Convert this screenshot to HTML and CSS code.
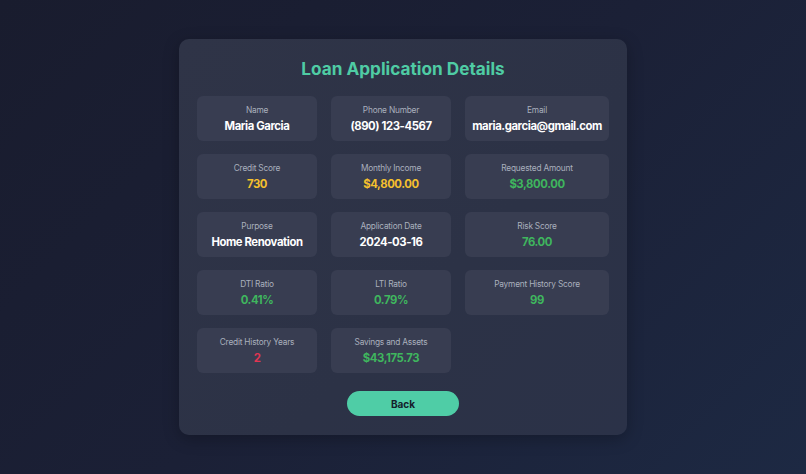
FILE: index.html
```html
<!DOCTYPE html>
<html lang="en">
<head>
<meta charset="utf-8">
<title>Loan Application Details</title>
<link rel="stylesheet" href="styles.css">
</head>
<body>
<main class="card">
  <h1 class="title">Loan Application Details</h1>
  <div class="grid">
    <div class="item"><div class="label">Name</div><div class="value">Maria Garcia</div></div>
    <div class="item"><div class="label">Phone Number</div><div class="value">(890) 123-4567</div></div>
    <div class="item"><div class="label">Email</div><div class="value">maria.garcia@gmail.com</div></div>
    <div class="item"><div class="label">Credit Score</div><div class="value yellow">730</div></div>
    <div class="item"><div class="label">Monthly Income</div><div class="value yellow">$4,800.00</div></div>
    <div class="item"><div class="label">Requested Amount</div><div class="value green">$3,800.00</div></div>
    <div class="item"><div class="label">Purpose</div><div class="value">Home Renovation</div></div>
    <div class="item"><div class="label">Application Date</div><div class="value">2024-03-16</div></div>
    <div class="item"><div class="label">Risk Score</div><div class="value green">76.00</div></div>
    <div class="item"><div class="label">DTI Ratio</div><div class="value green">0.41%</div></div>
    <div class="item"><div class="label">LTI Ratio</div><div class="value green">0.79%</div></div>
    <div class="item"><div class="label">Payment History Score</div><div class="value green">99</div></div>
    <div class="item"><div class="label">Credit History Years</div><div class="value red">2</div></div>
    <div class="item"><div class="label">Savings and Assets</div><div class="value green">$43,175.73</div></div>
  </div>
  <div class="actions"><button class="back">Back</button></div>
</main>
</body>
</html>
```
FILE: styles.css
```css
* { box-sizing: border-box; }
html, body { height: 100%; }
body {
  margin: 0;
  font-family: Inter, "Noto Sans", sans-serif;
  background: linear-gradient(135deg, #191c2e 0%, #1b2036 50%, #1d2943 100%);
  display: flex;
  align-items: center;
  justify-content: center;
}
.card {
  width: 448px;
  padding: 19px 18px 19px;
  background: linear-gradient(135deg, #2f3447 0%, #2c3246 60%, #2b3248 100%);
  border-radius: 10px;
  box-shadow: 0 4px 16px rgba(0,0,0,0.25);
}
.title {
  margin: 0 0 16px;
  text-align: center;
  font-size: 17.2px;
  line-height: 22px;
  font-weight: 700;
  color: #4fcca4;
}
.grid {
  display: grid;
  grid-template-columns: 120px 120px 144px;
  column-gap: 14px;
  row-gap: 13px;
}
.item {
  background: #383d51;
  border-radius: 6px;
  padding: 8px 4px 0;
  text-align: center;
  height: 45px;
}
.label {
  font-size: 8.3px;
  line-height: 12px;
  letter-spacing: -0.2px;
  color: #aab0bd;
  margin-bottom: 2px;
}
.value {
  font-size: 11.3px;
  line-height: 16px;
  letter-spacing: -0.4px;
  font-weight: 700;
  color: #ffffff;
  white-space: nowrap;
}
.yellow { color: #f5c02e; }
.green { color: #3fb65e; }
.red { color: #e23552; }
.actions {
  display: flex;
  justify-content: center;
  margin-top: 18px;
}
.back {
  width: 112px;
  height: 25px;
  border: none;
  border-radius: 13px;
  background: #4fcda6;
  color: #15202a;
  font-family: Inter, "Noto Sans", sans-serif;
  font-size: 10px;
  font-weight: 700;
}
```
